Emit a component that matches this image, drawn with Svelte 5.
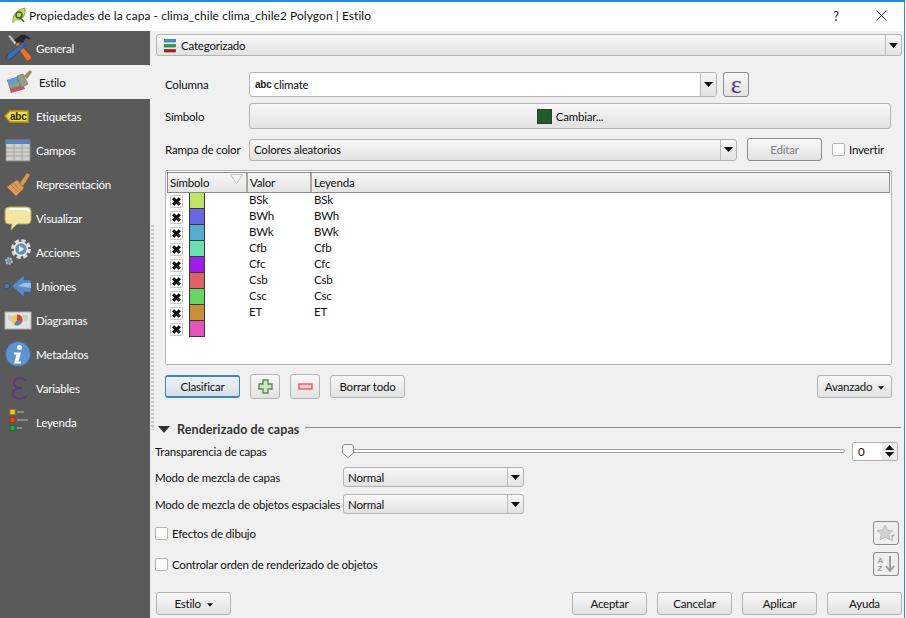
<script>
  const tabs = ['General', 'Estilo', 'Etiquetas', 'Campos', 'Representación', 'Visualizar', 'Acciones', 'Uniones', 'Diagramas', 'Metadatos', 'Variables', 'Leyenda'];
  const active = 'Estilo';

  const categories = [
    { value: 'BSk', color: '#c4e364' },
    { value: 'BWh', color: '#6868e6' },
    { value: 'BWk', color: '#55aed2' },
    { value: 'Cfb', color: '#68e0b0' },
    { value: 'Cfc', color: '#a01ce8' },
    { value: 'Csb', color: '#e06068' },
    { value: 'Csc', color: '#68d462' },
    { value: 'ET', color: '#c98f38' },
    { value: '', color: '#e254b8' }
  ];
</script>

{#snippet arrow()}
  <svg class="arrow" width="9" height="5" viewBox="0 0 9 5"><path d="M0 0h9L4.500 5z" fill="#111" /></svg>
{/snippet}

{#snippet tabIcon(name)}
  <svg width="28" height="28" viewBox="0 0 28 28">
    {#if name === 'General'}
      <path d="M4 2l2-1 7 8-2 2z" fill="#c8c8c8" stroke="#666" stroke-width=".5" />
      <path d="M11 10l3-2 14 15-2 3-3 1z" fill="#e8742a" stroke="#8a3a10" stroke-width=".6" />
      <path d="M10 6l7-5c4-1 8 1 10 5l-5-2-2 3-1 2-3-1-3 1z" fill="#26262a" />
      <path d="M19 8l3 3L8 24l-4 2-2-2 2-4z" fill="#3a6cb0" stroke="#1c3a68" stroke-width=".6" />
    {:else if name === 'Estilo'}
      <path d="M3 12l13-4 5 13-14 4z" fill="#c8566e" />
      <path d="M3 12l13-4 2 5-13 4z" fill="#5f9fd8" />
      <path d="M5 17l13-4 1 4-12 3z" fill="#6fb87a" />
      <path d="M13 8l6-2 5 10-7 4z" fill="#9a9a88" stroke="#6c6c5c" stroke-width=".6" />
      <path d="M20 8l6-6 2 2-5 7z" fill="#8c8a68" />
    {:else if name === 'Etiquetas'}
      <path d="M1 14l5-5h18v11H6z" fill="#f4dc3c" stroke="#b49a10" stroke-width="1.500" />
      <text x="6" y="18" class="abc">abc</text>
    {:else if name === 'Campos'}
      <rect x="2" y="4" width="24" height="21" fill="#d0d0ca" stroke="#8a8a86" />
      <rect x="2" y="4" width="24" height="4" fill="#5a84bc" />
      <path d="M2 12h24M2 16h24M2 20h24M10 8v17M18 8v17" stroke="#a4a4a0" />
    {:else if name === 'Representación'}
      <path d="M16 13l7-10 3 2-7 11z" fill="#d49a4c" />
      <path d="M3 17l10-7 7 8-8 8z" fill="#dc9c58" stroke="#a8702e" stroke-width=".8" />
      <path d="M7 15l7 7M10 13l6 7" stroke="#b07a3c" />
    {:else if name === 'Visualizar'}
      <path d="M5 3h18q4 0 4 4v9q0 4-4 4H13l-6 6 1-6H5q-4 0-4-4V7q0-4 4-4z" fill="#f2e6a0" stroke="#b8a860" />
      <path d="M5 5h17q3 0 3 3" fill="none" stroke="#fff" stroke-width="2" />
    {:else if name === 'Acciones'}
      <circle cx="17" cy="11" r="8" fill="none" stroke="#d8d8d8" stroke-width="4" stroke-dasharray="4 2.300" />
      <circle cx="17" cy="11" r="6.500" fill="#5f8fc4" stroke="#e8e8e8" stroke-width="1.500" />
      <path d="M15 7.500l5 3.500-5 3.500z" fill="#fff" />
      <circle cx="5" cy="23" r="3" fill="#6f93bc" stroke="#bbb" stroke-dasharray="2 1" stroke-width="1.600" />
    {:else if name === 'Uniones'}
      <path d="M8 14L20 3v5h7v12h-7v5z" fill="#5a8cc8" stroke="#345c90" stroke-width=".6" />
      <path d="M14 14l6-3h7v5z" fill="#9cc0e8" />
      <circle cx="3" cy="14" r="2.800" fill="#4a78b0" stroke="#29486e" stroke-width=".6" />
    {:else if name === 'Diagramas'}
      <rect x="1" y="6" width="26" height="17" fill="#e4e4de" stroke="#b0b0a8" />
      <path d="M4 9l5 1 3 3-4 3-4-2zM18 9h6v5l-3 2z" fill="#cfcfc8" />
      <circle cx="13" cy="14" r="5.500" fill="#e8d050" />
      <path d="M13 14V8.500a5.500 5.500 0 0 1 5 8z" fill="#cc4438" />
      <path d="M13 14l5 2.500a5.500 5.500 0 0 1-8 2z" fill="#5a80c0" />
    {:else if name === 'Metadatos'}
      <circle cx="14" cy="14" r="12.500" fill="#5f93d0" stroke="#3f6fa8" />
      <circle cx="15.500" cy="7.500" r="2.500" fill="#fff" />
      <path d="M10 12.500h7l-2.500 9h2.500v2H10l2.500-9H10z" fill="#fff" />
    {:else if name === 'Variables'}
      <path d="M22 7C19 3 10 3 10 9c0 4 4 5 8 5-5 0-9 1-9 6 0 6 11 6 14 1" fill="none" stroke="#5c3a78" stroke-width="2" />
    {:else if name === 'Leyenda'}
      <rect x="6" y="1.500" width="5" height="5" fill="#f8c818" stroke="#a88010" />
      <rect x="6" y="9.500" width="5" height="5" fill="#e8480c" stroke="#a03008" />
      <rect x="6" y="17.500" width="5" height="5" fill="#18a858" stroke="#107038" />
      <path d="M13 4h7M13 12h11M13 20h5" stroke="#999" stroke-width="1.500" />
    {/if}
  </svg>
{/snippet}

<div class="window">
  <header class="titlebar">
    <svg class="logo" width="18" height="18" viewBox="0 0 18 18">
      <path d="M3 16C2 9 6 3 15 1c1 6-2 12-8 12" fill="#c6d86a" stroke="#8aa63a" />
      <circle cx="9" cy="8" r="3" fill="none" stroke="#3f6a18" stroke-width="1.500" />
      <path d="M10 10l4 5" stroke="#3f6a18" stroke-width="1.500" />
    </svg>
    <span class="title">Propiedades de la capa - clima_chile clima_chile2 Polygon | Estilo</span>
    <span class="help">?</span>
    <svg class="close" width="11" height="11" viewBox="0 0 11 11"><path d="M.5.500l10 10M10.500.500l-10 10" stroke="#222" /></svg>
  </header>

  <div class="content">
    <nav class="sidebar">
      {#each tabs as tab}
        <div class="tab" class:active={tab === active}>
          {@render tabIcon(tab)}
          <span>{tab}</span>
        </div>
      {/each}
    </nav>

    <div class="splitter"></div>

    <main class="main">
      <div class="combo renderer">
        <svg width="12" height="15" viewBox="0 0 12 15">
          <rect x=".5" y="1.500" width="11" height="2.500" fill="#3a9ad8" stroke="#1c5c90" stroke-width=".6" />
          <rect x=".5" y="6.500" width="11" height="2.500" fill="#22a860" stroke="#106838" stroke-width=".6" />
          <rect x=".5" y="11.500" width="11" height="2.500" fill="#c02020" stroke="#701010" stroke-width=".6" />
        </svg>
        <span class="grow">Categorizado</span>
        <span class="drop">{@render arrow()}</span>
      </div>

      <div class="form">
        <div class="row columna">
          <label for="col">Columna</label>
          <div class="combo input" id="col">
            <b class="abc-mark">abc</b><span class="grow">climate</span>
            <span class="drop">{@render arrow()}</span>
          </div>
          <button class="btn epsilon">ε</button>
        </div>
        <div class="row simbolo">
          <label for="sym">Símbolo</label>
          <button class="btn change" id="sym"><i class="swatch-main"></i>Cambiar...</button>
        </div>
        <div class="row rampa">
          <label for="ramp">Rampa de color</label>
          <div class="combo ramp" id="ramp">
            <span class="grow">Colores aleatorios</span>
            <span class="drop">{@render arrow()}</span>
          </div>
          <button class="btn edit">Editar</button>
          <span class="check invert"><i class="box"></i>Invertir</span>
        </div>

        <div class="tree">
          <div class="thead">
            <div class="th c1">Símbolo
              <svg class="sort" width="13" height="10" viewBox="0 0 13 10"><path d="M.5.500h12L6.500 9.500z" fill="none" stroke="#c4c4c4" /></svg>
            </div>
            <div class="th c2">Valor</div>
            <div class="th c3">Leyenda</div>
          </div>
          {#each categories as cat}
            <div class="tr">
              <div class="c1 cell">
                <span class="mark">
                  <svg width="9" height="9" viewBox="0 0 9 9"><path d="M1.200 1.200l6.600 6.600M7.800 1.200L1.200 7.800" stroke="#000" stroke-width="3" /></svg>
                </span>
                <i class="swatch" style="background: {cat.color}"></i>
              </div>
              <div class="c2 cell">{cat.value}</div>
              <div class="c3 cell">{cat.value}</div>
            </div>
          {/each}
        </div>

        <div class="row actions">
          <button class="btn classify">Clasificar</button>
          <button class="btn icon-btn">
            <svg width="15" height="15" viewBox="0 0 15 15"><path d="M5 1h5v4h4v5h-4v4H5v-4H1V5h4z" fill="#cfe6c8" stroke="#4f8a4f" stroke-width="1.300" /></svg>
          </button>
          <button class="btn icon-btn">
            <svg width="15" height="7" viewBox="0 0 15 7"><rect x="1" y="1" width="13" height="5" fill="#fbd0d0" stroke="#e85050" stroke-width="1.300" /></svg>
          </button>
          <button class="btn clear">Borrar todo</button>
          <button class="btn advanced">Avanzado {@render arrow()}</button>
        </div>
      </div>

      <div class="section">
        <svg width="12" height="7" viewBox="0 0 12 7"><path d="M0 0h12L6 7z" fill="#333" /></svg>
        <b>Renderizado de capas</b>
        <i class="rule"></i>
      </div>

      <div class="layer opacity">
        <span class="layer-label">Transparencia de capas</span>
        <div class="slider">
          <i class="groove"></i>
          <svg class="handle" width="12" height="14" viewBox="0 0 12 14"><path d="M2 .5h8l1.500 1.500v7l-5.500 4.500L.5 9V2z" fill="#f4f4f4" stroke="#8c8c8c" /></svg>
        </div>
        <div class="spin">
          <span class="grow">0</span>
          <span class="spin-btns">
            <svg width="9" height="5" viewBox="0 0 9 5"><path d="M0 5h9L4.500 0z" fill="#111" /></svg>
            <svg width="9" height="5" viewBox="0 0 9 5"><path d="M0 0h9L4.500 5z" fill="#111" /></svg>
          </span>
        </div>
      </div>
      <div class="layer blend">
        <span class="layer-label">Modo de mezcla de capas</span>
        <div class="combo mode"><span class="grow">Normal</span><span class="drop">{@render arrow()}</span></div>
      </div>
      <div class="layer blend2">
        <span class="layer-label">Modo de mezcla de objetos espaciales</span>
        <div class="combo mode"><span class="grow">Normal</span><span class="drop">{@render arrow()}</span></div>
      </div>

      <div class="option effects">
        <span class="check"><i class="box"></i>Efectos de dibujo</span>
        <button class="btn square">
          <svg width="20" height="20" viewBox="0 0 20 20">
            <path d="M9 2l2.300 5 5.500.600-4.100 3.700 1.200 5.400L9 14l-4.900 2.700 1.200-5.400L1.200 7.600l5.500-.6z" fill="#d4d4d4" stroke="#bcbcbc" />
            <path d="M16 12v6M16 14q0-2 2.500-2" stroke="#a8a8a8" fill="none" stroke-width="1.300" />
          </svg>
        </button>
      </div>
      <div class="option ordering">
        <span class="check"><i class="box"></i>Controlar orden de renderizado de objetos</span>
        <button class="btn square">
          <svg width="20" height="20" viewBox="0 0 20 20">
            <text x="1.500" y="9" class="az">A</text>
            <text x="1.500" y="17" class="az">Z</text>
            <path d="M14 2v15M10 12l4 5 4-5" stroke="#9c9c9c" stroke-width="2" fill="none" />
          </svg>
        </button>
      </div>

      <footer class="footer">
        <button class="btn style-btn">Estilo {@render arrow()}</button>
        <span class="grow"></span>
        <button class="btn foot">Aceptar</button>
        <button class="btn foot">Cancelar</button>
        <button class="btn foot">Aplicar</button>
        <button class="btn foot">Ayuda</button>
      </footer>
    </main>
  </div>
</div>

<style>
  :global(body) {
    background: #fff;
  }

  .window {
    width: 905px;
    height: 618px;
    border-top: 2px solid #1c8ee0;
    border-right: 1px solid #1c8ee0;
    box-sizing: border-box;
    display: flex;
    flex-direction: column;
    overflow: hidden;
    font: 11.500px Lato, sans-serif;
    letter-spacing: -0.2px;
    color: #111;
    background: #f0f0f0;
  }

  .titlebar {
    height: 29px;
    box-sizing: border-box;
    flex: none;
    background: #fff;
    display: flex;
    align-items: center;
    padding: 0 17px 2px 10px;
    font-size: 12px;
    letter-spacing: 0.05px;
  }

  .title {
    margin-left: 1px;
    flex: 1;
  }

  .help {
    font-size: 13px;
    margin-right: 37px;
  }

  .content {
    flex: 1;
    display: flex;
    min-height: 0;
  }

  .sidebar {
    width: 150px;
    flex: none;
    background: #5a5a5a;
  }

  .tab {
    height: 34px;
    display: flex;
    align-items: center;
    gap: 4px;
    padding-left: 4px;
    color: #fff;
  }

  .tab.active {
    background: #f0f0f0;
    color: #111;
    gap: 7px;
  }

  .abc {
    font: bold 10px "Liberation Sans", sans-serif;
    fill: #2a2a10;
  }

  .az {
    font: bold 8px "Liberation Sans", sans-serif;
    fill: #9c9c9c;
  }

  .splitter {
    width: 3px;
    margin: 194px 0 188px 1px;
    flex: none;
    background: repeating-linear-gradient(#c6c6c6 0 2px, transparent 2px 4px);
  }

  .main {
    flex: 1;
    min-width: 0;
    padding: 3px 2px 0 2px;
    display: flex;
    flex-direction: column;
    position: relative;
  }

  .grow {
    flex: 1;
  }

  .combo,
  .btn {
    box-sizing: border-box;
    border: 1px solid #b4b4b4;
    border-radius: 3px;
    background: linear-gradient(#f8f8f8, #e2e2e2);
    font: inherit;
    letter-spacing: inherit;
    color: #111;
    padding: 0;
  }

  .combo {
    display: flex;
    align-items: center;
    padding-left: 4px;
    overflow: hidden;
  }

  .drop {
    width: 15px;
    align-self: stretch;
    flex: none;
    display: flex;
    align-items: center;
    justify-content: center;
    border-left: 1px solid #bcbcbc;
  }

  .arrow {
    display: inline-block;
    vertical-align: middle;
  }

  .renderer {
    height: 22px;
    gap: 5px;
    padding-left: 7px;
  }

  .form {
    padding: 0 10px 0 9px;
    display: flex;
    flex-direction: column;
  }

  .row {
    display: flex;
    align-items: center;
  }

  .row label {
    width: 84px;
    flex: none;
  }

  .columna {
    margin-top: 16px;
    height: 25px;
  }

  .input {
    width: 468px;
    height: 25px;
    background: #fff;
  }

  .abc-mark {
    font: bold 10px "Liberation Sans", sans-serif;
    margin: 0 2px 0 1px;
    color: #222;
  }

  .input .drop {
    background: linear-gradient(#f6f6f6, #e2e2e2);
  }

  .epsilon {
    width: 26px;
    height: 25px;
    margin-left: 6px;
    font: 26px "Liberation Serif", serif;
    color: #5c3a78;
    border-color: #8c8c8c;
    line-height: 20px;
  }

  .simbolo {
    margin-top: 6px;
  }

  .change {
    width: 642px;
    height: 26px;
    display: flex;
    align-items: center;
    justify-content: center;
    gap: 4px;
  }

  .swatch-main {
    width: 15px;
    height: 15px;
    background: #1f5c27;
    border: 1px solid #3a3a3a;
    box-sizing: border-box;
  }

  .rampa {
    margin-top: 9px;
    height: 23px;
  }

  .ramp {
    width: 488px;
    height: 22px;
  }

  .edit {
    width: 75px;
    height: 23px;
    margin-left: 10px;
    color: #808080;
    border-color: #8c8c8c;
  }

  .check {
    display: flex;
    align-items: center;
    gap: 4px;
  }

  .invert {
    margin-left: 10px;
  }

  .box {
    width: 13px;
    height: 13px;
    box-sizing: border-box;
    background: #fbfbfb;
    border: 1px solid #b4b4b4;
    border-radius: 2px;
    flex: none;
  }

  .tree {
    box-sizing: border-box;
    width: 727px;
    height: 195px;
    margin-top: 9px;
    border: 1px solid #b4b4b4;
    border-radius: 2px;
    background: #fff;
    padding: 1px;
  }

  .thead {
    display: flex;
    height: 21px;
    background: linear-gradient(#f6f6f6, #e4e4e4);
    border: 1px solid #8c8c8c;
    box-sizing: border-box;
  }

  .th {
    display: flex;
    align-items: center;
    padding-left: 2px;
    border-right: 2px solid #a8a8a8;
    position: relative;
    box-sizing: border-box;
  }

  .th.c3 {
    border-right: 0;
    flex: 1;
  }

  .c1 {
    width: 80px;
  }

  .c2 {
    width: 64px;
  }

  .sort {
    position: absolute;
    right: 3px;
    top: 1px;
  }

  .tr {
    display: flex;
    height: 16px;
  }

  .cell {
    box-sizing: border-box;
    padding-left: 3px;
    line-height: 14px;
  }

  .tr .c1 {
    padding-left: 3px;
    display: flex;
    align-items: center;
    gap: 6px;
  }

  .tr .c2 {
    padding-left: 2px;
  }

  .mark {
    width: 13px;
    height: 13px;
    box-sizing: border-box;
    border: 1px solid #c8c8c8;
    border-radius: 1px;
    display: flex;
    align-items: center;
    justify-content: center;
  }

  .swatch {
    width: 16px;
    height: 16px;
    box-sizing: border-box;
    border: 1px solid #3a3a3a;
    border-top: 0;
  }

  .actions {
    margin-top: 10px;
    height: 23px;
  }

  .classify {
    width: 75px;
    height: 23px;
    border: 1px solid #3a86c8;
    border-width: 2px 1px;
    background: linear-gradient(#eef2f6, #d6dfe8);
  }

  .icon-btn {
    width: 30px;
    height: 25px;
    margin-left: 10px;
    display: flex;
    align-items: center;
    justify-content: center;
  }

  .clear {
    width: 75px;
    height: 23px;
    margin-left: 10px;
  }

  .advanced {
    width: 75px;
    height: 23px;
    margin-left: auto;
  }

  .advanced .arrow,
  .style-btn .arrow {
    width: 6px;
    height: 4px;
    margin-left: 3px;
  }

  .section {
    display: flex;
    align-items: center;
    margin: 23px 0 0 2px;
    height: 16px;
    color: #333;
  }

  .section b {
    margin-left: 7px;
    font-weight: 700;
    font-size: 12.500px;
    letter-spacing: 0.1px;
  }

  .rule {
    flex: 1;
    height: 1px;
    background: #8c8c8c;
    margin: 0 1px 4px 6px;
  }

  .layer {
    display: flex;
    align-items: center;
    margin-left: -1px;
  }

  .layer-label {
    width: 188px;
    flex: none;
    white-space: nowrap;
  }

  .opacity {
    margin-top: 4px;
    height: 20px;
  }

  .slider {
    width: 503px;
    height: 14px;
    margin-left: -1px;
    position: relative;
    display: flex;
    align-items: center;
  }

  .groove {
    flex: 1;
    height: 4px;
    box-sizing: border-box;
    border: 1px solid #a0a0a0;
    border-radius: 2px;
    background: #fff;
  }

  .handle {
    position: absolute;
    left: 0;
    top: 0;
  }

  .spin {
    width: 46px;
    height: 19px;
    margin-left: 7px;
    box-sizing: border-box;
    border: 1px solid #b4b4b4;
    border-radius: 2px;
    background: #fff;
    display: flex;
    align-items: center;
    padding-left: 5px;
  }

  .spin-btns {
    width: 15px;
    align-self: stretch;
    background: #ececec;
    display: flex;
    flex-direction: column;
    align-items: center;
    justify-content: space-evenly;
  }

  .blend {
    margin-top: 6px;
  }

  .blend2 {
    margin-top: 7px;
  }

  .mode {
    width: 181px;
    height: 20px;
  }

  .option {
    display: flex;
    align-items: center;
    justify-content: space-between;
    margin: 7px 3px 0 -1px;
    height: 24px;
  }

  .square {
    width: 26px;
    height: 24px;
    border-color: #8c8c8c;
    display: flex;
    align-items: center;
    justify-content: center;
    background: #eee;
  }

  .footer {
    display: flex;
    gap: 10px;
    margin-top: 16px;
  }

  .foot,
  .style-btn {
    width: 75px;
    height: 23px;
  }
</style>
